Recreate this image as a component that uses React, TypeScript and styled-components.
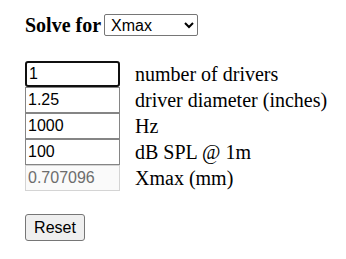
import styled, { createGlobalStyle } from 'styled-components';

const GlobalStyle = createGlobalStyle`
  body {
    margin: 0;
    background: #ffffff;
    font-family: "Liberation Serif", "Times New Roman", serif;
    color: #000000;
  }
`;

const fields = [
  { value: '1', label: 'number of drivers' },
  { value: '1.25', label: 'driver diameter (inches)' },
  { value: '1000', label: 'Hz' },
  { value: '100', label: 'dB SPL @ 1m' },
  { value: '0.707096', label: 'Xmax (mm)', disabled: true },
];

const App = () => {
  return (
    <Page>
      <GlobalStyle />
      <SolveRow>
        <SolveLabel>Solve for</SolveLabel>
        <Select defaultValue="xmax">
          <option value="drivers">Drivers</option>
          <option value="diameter">Diameter</option>
          <option value="hz">Hz</option>
          <option value="spl">SPL</option>
          <option value="xmax">Xmax</option>
        </Select>
      </SolveRow>
      <Fields>
        {fields.map((f, i) => (
          <Row key={i}>
            <Input
              defaultValue={f.value}
              disabled={f.disabled}
              $focused={i === 0}
            />
            <Label>{f.label}</Label>
          </Row>
        ))}
      </Fields>
      <ResetButton>Reset</ResetButton>
    </Page>
  );
};

export default App;

const Page = styled.div`
  padding: 14px 0 0 25px;
  display: flex;
  flex-direction: column;
  align-items: flex-start;
`;

const SolveRow = styled.div`
  display: flex;
  align-items: center;
  gap: 3px;
  height: 22px;
`;

const SolveLabel = styled.span`
  font-weight: bold;
  font-size: 20px;
  line-height: 22px;
`;

const Select = styled.select`
  box-sizing: border-box;
  width: 94px;
  height: 22px;
  font-family: "Liberation Sans", Arial, sans-serif;
  font-size: 16px;
  color: #000;
  background: #fff;
  border: 1px solid #767676;
  border-radius: 2px;
  padding: 0 0 0 2px;
`;

const Fields = styled.div`
  margin-top: 25px;
  display: flex;
  flex-direction: column;
`;

const Row = styled.div`
  display: flex;
  align-items: center;
  height: 26px;
`;

const Input = styled.input<{ $focused: boolean }>`
  box-sizing: border-box;
  width: 95px;
  height: 26px;
  margin: 0;
  padding: 1px 2px;
  font-family: "Liberation Sans", Arial, sans-serif;
  font-size: 16px;
  color: #000;
  background: #fff;
  border: ${({ $focused }) => ($focused ? '2px solid #101010' : '1px solid #858585')};
  border-radius: ${({ $focused }) => ($focused ? '3px' : '0')};
  outline: none;

  &:disabled {
    color: #6d6d6d;
    background: #fafafa;
    border-color: #d4d4d4;
  }
`;

const Label = styled.span`
  margin-left: 15px;
  font-size: 20px;
  line-height: 26px;
  white-space: nowrap;
`;

const ResetButton = styled.button`
  box-sizing: border-box;
  margin-top: 23px;
  width: 60px;
  height: 27px;
  padding: 0;
  font-family: "Liberation Sans", Arial, sans-serif;
  font-size: 16px;
  color: #000;
  background: #efefef;
  border: 1px solid #767676;
  border-radius: 3px;
`;
